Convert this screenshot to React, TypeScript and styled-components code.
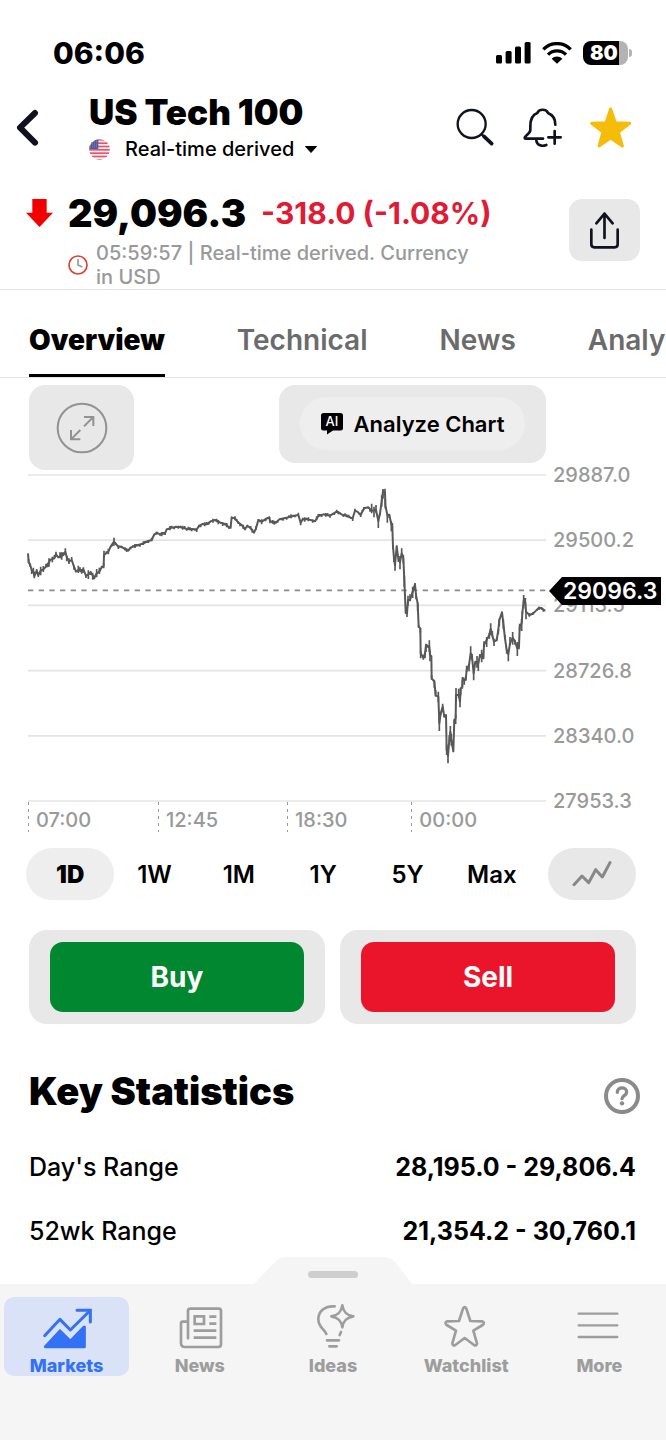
import React, { useState } from "react";
import styled, { createGlobalStyle } from "styled-components";

const GlobalStyle = createGlobalStyle`
  *, *::before, *::after { box-sizing: border-box; }
  body {
    margin: 0;
    background: #fff;
    color: #000;
    font-family: Inter, "Liberation Sans", sans-serif;
  }
  button {
    margin: 0;
    padding: 0;
    border: 0;
    background: none;
    color: inherit;
    font-family: inherit;
    cursor: pointer;
  }
  h1, h2, p { margin: 0; }
  svg { display: block; flex: none; }
`;

const Screen = styled.div`
  display: flex;
  flex-direction: column;
  min-height: 100vh;
  overflow-x: clip;
`;

const Main = styled.main`
  flex: 1;
`;

/* ---------- Status bar ---------- */

const StatusBar = styled.div`
  display: flex;
  align-items: center;
  justify-content: space-between;
  height: 86px;
  padding: 20px 38px 0 53px;
`;

const Clock = styled.span`
  font-size: 30px;
  font-weight: 800;
  line-height: 36px;
`;

const StatusIcons = styled.div`
  display: flex;
  align-items: center;
  gap: 11px;
`;

const Battery = styled.span`
  position: relative;
  width: 45px;
  height: 24px;
  padding-left: 7px;
  border-radius: 8px;
  background: linear-gradient(90deg, #000 80%, #b3b3b3 80%);
  color: #fff;
  font-size: 20px;
  font-weight: 900;
  line-height: 25px;

  &::after {
    content: "";
    position: absolute;
    top: 8px;
    right: -4px;
    width: 3px;
    height: 8px;
    border-radius: 0 3px 3px 0;
    background: #b3b3b3;
  }
`;

/* ---------- Header ---------- */

const Header = styled.header`
  display: flex;
  align-items: center;
  height: 84px;
  padding: 0 34px 0 16px;
`;

const BackButton = styled.button`
  width: 73px;
`;

const TitleBlock = styled.div`
  flex: 1;
  display: flex;
  flex-direction: column;
  align-items: flex-start;
  gap: 2px;
`;

const Title = styled.h1`
  font-size: 35px;
  font-weight: 900;
  line-height: 40px;
  white-space: nowrap;
`;

const SourceButton = styled.button`
  display: flex;
  align-items: center;
  font-size: 20px;
  font-weight: 500;
  line-height: 30px;
  white-space: nowrap;
`;

const SourceLabel = styled.span`
  margin: 0 11px 0 15px;
`;

const HeaderActions = styled.div`
  display: flex;
  align-items: center;
  gap: 27px;
`;

/* ---------- Quote ---------- */

const Quote = styled.section`
  display: flex;
  align-items: flex-start;
  padding: 20px 26px 0 26px;
  border-bottom: 1px solid #e4e4e4;
`;

const Direction = styled.span`
  width: 42px;
  padding-top: 9px;
`;

const QuoteBody = styled.div`
  flex: 1;
  min-width: 0;
`;

const PriceRow = styled.div`
  display: flex;
  align-items: center;
  gap: 15px;
  height: 46px;
  margin-bottom: 5px;
  line-height: 46px;
  white-space: nowrap;
`;

const Price = styled.span`
  font-size: 38px;
  font-weight: 900;
`;

const Change = styled.span`
  color: #df1b36;
  font-size: 30px;
  font-weight: 700;
`;

const Note = styled.div`
  display: flex;
  align-items: center;
  gap: 8px;
  max-width: 420px;
  color: #999;
  font-size: 20px;
  font-weight: 500;
  line-height: 24px;
`;

const ShareButton = styled.button`
  display: flex;
  align-items: center;
  justify-content: center;
  width: 71px;
  height: 62px;
  margin-top: 9px;
  border-radius: 13px;
  background: #e8e8e8;
`;

/* ---------- Tabs ---------- */

const Tabs = styled.nav`
  display: flex;
  gap: 72px;
  padding: 0 0 0 29px;
  border-bottom: 1px solid #e4e4e4;
  overflow: hidden;
`;

const Tab = styled.button<{ $active: boolean }>`
  flex: none;
  height: 87px;
  padding: 15px 0 0;
  border-bottom: 3px solid ${(p) => (p.$active ? "#000" : "transparent")};
  color: ${(p) => (p.$active ? "#000" : "#6b6b6b")};
  font-size: 28px;
  font-weight: ${(p) => (p.$active ? 900 : 600)};
  line-height: 36px;
`;

/* ---------- Chart ---------- */

const ChartSection = styled.section`
  display: flex;
  padding: 7px 0 0 28px;
`;

const ChartArea = styled.div`
  flex: 1;
  min-width: 0;
`;

const ChartTools = styled.div`
  display: flex;
  align-items: flex-start;
  justify-content: space-between;
  margin-bottom: 5px;
  padding-left: 1px;
`;

const ExpandButton = styled.button`
  display: flex;
  align-items: center;
  justify-content: center;
  width: 105px;
  height: 85px;
  border-radius: 16px;
  background: #e8e8e8;
`;

const AnalyzeFrame = styled.div`
  padding: 12px 21px 13px;
  border-radius: 16px;
  background: #e8e8e8;
`;

const AnalyzeButton = styled.button`
  display: flex;
  align-items: center;
  justify-content: center;
  gap: 11px;
  width: 225px;
  height: 53px;
  border-radius: 27px;
  background: #eee;
  font-size: 22px;
  font-weight: 600;
  white-space: nowrap;
`;

const Plot = styled.svg`
  width: 100%;
  height: 326px;
  overflow: visible;
`;

const TimeAxis = styled.div`
  display: flex;
  margin-top: 1px;
`;

const TimeMark = styled.span<{ $span: number }>`
  flex: ${(p) => p.$span} 1 0;
  padding: 6px 0 0 8px;
  background: repeating-linear-gradient(#999 0 3px, transparent 3px 7px) left / 1px 100% no-repeat;
  color: #999;
  font-size: 20px;
  font-weight: 500;
  line-height: 24px;
`;

const PriceAxis = styled.div`
  position: relative;
  flex: 0 0 120px;
  display: flex;
  flex-direction: column;
  justify-content: space-between;
  height: 428px;
  padding: 78px 0 0 7px;
  color: #999;
  font-size: 20px;
  font-weight: 500;
  line-height: 24px;
`;

const PriceTag = styled.span`
  position: absolute;
  top: 192px;
  left: 3px;
  height: 28px;
  padding: 0 4px 0 14px;
  background: #000;
  clip-path: polygon(0 50%, 13px 0, 100% 0, 100% 100%, 13px 100%);
  color: #fff;
  font-size: 23px;
  font-weight: 600;
  line-height: 28px;
`;

/* ---------- Ranges ---------- */

const RangeRow = styled.div`
  display: flex;
  gap: 14px;
  padding: 16px 30px 0 28px;
`;

const Ranges = styled.div`
  flex: 1;
  display: grid;
  grid-template-columns: repeat(6, 1fr);
`;

const RangeButton = styled.button<{ $active: boolean }>`
  height: 52px;
  margin: 0 -2px;
  border-radius: 26px;
  background: ${(p) => (p.$active ? "#eee" : "transparent")};
  font-size: 24px;
  font-weight: ${(p) => (p.$active ? 900 : 600)};
`;

const ChartTypeButton = styled.button`
  display: flex;
  align-items: center;
  justify-content: center;
  width: 88px;
  height: 52px;
  border-radius: 26px;
  background: #e8e8e8;
`;

/* ---------- Trade ---------- */

const TradeRow = styled.div`
  display: grid;
  grid-template-columns: 1fr 1fr;
  gap: 15px;
  padding: 30px 30px 0 29px;
`;

const TradeFrame = styled.div`
  padding: 12px 21px;
  border-radius: 18px;
  background: #e8e8e8;
`;

const TradeButton = styled.button<{ $color: string }>`
  width: 100%;
  height: 70px;
  border-radius: 13px;
  background: ${(p) => p.$color};
  color: #fff;
  font-size: 28px;
  font-weight: 700;
`;

/* ---------- Key statistics ---------- */

const Stats = styled.section`
  padding: 44px 30px 0 29px;
`;

const StatsHead = styled.div`
  display: flex;
  align-items: flex-end;
  justify-content: space-between;
  margin: 0 -4px 21px 0;
`;

const StatsTitle = styled.h2`
  font-size: 38px;
  font-weight: 900;
  line-height: 46px;
`;

const StatsTable = styled.table`
  width: 100%;
  border-collapse: collapse;
  font-size: 25px;

  tr { height: 64px; }
  th, td { padding: 0; }
  th { font-weight: 500; text-align: left; }
  td { font-weight: 700; text-align: right; }
`;

/* ---------- Bottom navigation ---------- */

const BottomNav = styled.nav`
  position: sticky;
  bottom: 0;
  display: grid;
  grid-template-columns: repeat(5, 1fr);
  height: 156px;
  padding: 13px 0 64px;
  background: #f5f5f5;
`;

const DrawerHandle = styled.span`
  position: absolute;
  left: 50%;
  bottom: 100%;
  width: 158px;
  height: 27px;
  transform: translateX(-50%);
`;

const NavItem = styled.button<{ $active: boolean }>`
  display: flex;
  flex-direction: column;
  align-items: center;
  justify-content: flex-end;
  gap: 4px;
  margin: 0 4px;
  border-radius: 10px;
  background: ${(p) => (p.$active ? "#d9e2f6" : "transparent")};
  color: ${(p) => (p.$active ? "#3371f5" : "#9d9d9d")};
  font-size: 18px;
  font-weight: 800;
  line-height: 20px;
`;

/* ---------- Icons ---------- */

const Signal = () => (
  <svg width="35" height="22" viewBox="0 0 35 22" aria-hidden="true">
    <rect x="0" y="13" width="6" height="8.500" rx="1.500" />
    <rect x="9.600" y="9" width="6" height="12.500" rx="1.500" />
    <rect x="19" y="4.500" width="6" height="17" rx="1.500" />
    <rect x="28.600" y="0" width="6" height="21.500" rx="1.500" />
  </svg>
);

const Wifi = () => (
  <svg width="30" height="22" viewBox="0 0 90 66" aria-hidden="true">
    <path d="M4 22 C27 -1 63 -1 86 22" fill="none" stroke="#000" strokeWidth="10" />
    <path d="M18 38 C33 23 57 23 72 38" fill="none" stroke="#000" strokeWidth="10" />
    <path d="M45 65 L29 50 C38 41 52 41 61 50 Z" />
  </svg>
);

const BackIcon = () => (
  <svg width="24" height="40" viewBox="0 0 72 120" fill="none" stroke="#10131f" strokeWidth="18" strokeLinecap="round" strokeLinejoin="round">
    <path d="M57 15 L12 59 L57 104" />
  </svg>
);

const FlagIcon = () => (
  <svg width="21" height="21" viewBox="0 0 63 63" aria-hidden="true">
    <defs>
      <clipPath id="flag">
        <circle cx="31.500" cy="31.500" r="31" />
      </clipPath>
    </defs>
    <g clipPath="url(#flag)">
      <rect width="63" height="63" fill="#f8f3f5" />
      {[0, 10, 20, 30, 40, 50, 60].map((y) => (
        <rect key={y} y={y} width="63" height="5" fill="#e8546a" />
      ))}
      <rect width="28" height="30" fill="#4c5a9c" />
      {[6, 12, 18, 24].map((y) => (
        <path key={y} d={`M4 ${y} H28`} stroke="#c3c9e3" strokeWidth="2" strokeDasharray="2 4" />
      ))}
    </g>
  </svg>
);

const CaretIcon = () => (
  <svg width="12" height="7" viewBox="0 0 12 7" aria-hidden="true">
    <path d="M0.500 0.500 H11.500 L6 6.500 Z" stroke="#000" strokeLinejoin="round" />
  </svg>
);

const SearchIcon = () => (
  <svg width="40" height="40" viewBox="0 0 120 120" fill="none" stroke="#10131f">
    <circle cx="47" cy="48" r="42" strokeWidth="7" />
    <path d="M77 79 L88 90" strokeWidth="7" />
    <path d="M84 85 L107 107" strokeWidth="11" strokeLinecap="round" />
  </svg>
);

const BellPlusIcon = () => (
  <svg width="40" height="40" viewBox="0 0 120 120" fill="none" stroke="#10131f" strokeWidth="8" strokeLinecap="round" strokeLinejoin="round">
    <path d="M97 50 C97 31 90 21 75 15 C70 2 48 2 43 15 C27 21 22 36 22 54 V66 C22 77 5 84 5 89 Q5 92 8 92 H60" />
    <path d="M76 88 H113 M95 69 V107" />
    <path d="M40 98 C43 113 57 116 70 111" />
  </svg>
);

const StarIcon = () => (
  <svg width="42" height="42" viewBox="0 0 126 126" fill="#f5bc0a" stroke="#f5bc0a" strokeWidth="9" strokeLinejoin="round">
    <path d="M62 6 L76 47 L119 49 L85 75 L97 117 L62 93 L27 117 L39 75 L5 49 L48 47 Z" />
  </svg>
);

const DownArrow = () => (
  <svg width="27" height="28" viewBox="0 0 81 84" aria-label="Down">
    <path d="M19 0 H62 V41 H81 L40.500 84 L0 41 H19 Z" fill="#f20000" />
  </svg>
);

const ClockIcon = () => (
  <svg width="20" height="20" viewBox="0 0 60 60" fill="none" aria-hidden="true">
    <circle cx="30" cy="30" r="27" stroke="#e0402f" strokeWidth="5" />
    <path d="M30 12 V30 L43 36" stroke="#999" strokeWidth="5" />
  </svg>
);

const ShareIcon = () => (
  <svg width="33" height="40" viewBox="0 0 99 120" fill="none" stroke="#10131f" strokeWidth="8" strokeLinecap="round" strokeLinejoin="round">
    <path d="M10 59 V103 Q10 112 19 112 H80 Q89 112 89 103 V59" />
    <path d="M49.500 11 V84 M25 40 L49.500 11 L74 40" />
  </svg>
);

const ExpandIcon = () => (
  <svg width="52" height="52" viewBox="0 0 156 156" fill="none" stroke="#929292" strokeWidth="6">
    <circle cx="78" cy="78" r="73" />
    <path d="M84 73 L112 45 M84 45 H112 V72 M73 84 L45 112 M45 84 V112 H73" />
  </svg>
);

const AiIcon = () => (
  <svg width="22" height="22" viewBox="0 0 22 22" aria-hidden="true">
    <path d="M2.500 0 H19.500 Q22 0 22 2.500 V15 Q22 17.500 19.500 17.500 H12 L6 21.500 V17.500 H2.500 Q0 17.500 0 15 V2.500 Q0 0 2.500 0 Z" />
    <text x="11" y="13" fill="#fff" fontFamily="Inter, sans-serif" fontSize="13" fontWeight="500" textAnchor="middle">
      AI
    </text>
  </svg>
);

const TrendIcon = () => (
  <svg width="40" height="28" viewBox="0 0 120 84" fill="none" stroke="#888" strokeWidth="9" strokeLinecap="round" strokeLinejoin="round">
    <path d="M6 74 L30 48 L50 68 L71 29 L91 51 L114 8" />
  </svg>
);

const HelpIcon = () => (
  <svg width="36" height="36" viewBox="0 0 108 108" fill="none" stroke="#8a8a8a">
    <circle cx="54" cy="54" r="48" strokeWidth="12" />
    <path d="M40 43 C40 25 68 26 68 42 C68 53 54 52 54 62" strokeWidth="10" strokeLinecap="round" />
    <circle cx="54" cy="76" r="6.500" fill="#8a8a8a" stroke="none" />
  </svg>
);

const NavIcon = ({ children }: { children: React.ReactNode }) => (
  <svg width="50" height="50" viewBox="0 0 150 150" fill="none" stroke="currentColor" strokeWidth="8" strokeLinecap="round" strokeLinejoin="round">
    {children}
  </svg>
);

const NAV_ITEMS = [
  {
    label: "Markets",
    icon: (
      <>
        <path d="M8 101 L54 52 L85 84 L143 27" strokeWidth="9" />
        <path d="M105 25 H145 V60" strokeWidth="9" strokeLinejoin="miter" />
        <path d="M8 134 L54 84 L85 115 L125 74 L129 74 V136 H9 Z" fill="currentColor" strokeWidth="5" />
      </>
    ),
  },
  {
    label: "News",
    icon: (
      <>
        <path d="M39 109 V27 Q39 20 46 20 H131 Q138 20 138 27 V127 Q138 135 130 135 H30 Q18 135 18 123 V64 Q18 59 23 59 H38" />
        <path d="M59 43 H87 V66 H59 Z M103 44 H124 M103 65 H124 M56 86 H124 M56 107 H124" strokeLinecap="butt" strokeLinejoin="miter" />
      </>
    ),
  },
  {
    label: "Ideas",
    icon: (
      <>
        <path d="M55 96 C50 82 31 76 31 52 C31 28 50 13 74 13 H80" />
        <path d="M99 90 L95 99" />
        <path d="M103 10 C106 30 115 39 136 43 C115 47 106 56 103 76 C100 56 91 47 70 43 C91 39 100 30 103 10 Z" />
        <path d="M57 115 H93 M64 133 H86" />
      </>
    ),
  },
  {
    label: "Watchlist",
    icon: (
      <path d="M66 20 Q71 11 76 20 L88 57 L123 58 Q133 61 125 69 L97 86 L108 124 Q107 133 99 129 L71 108 L43 129 Q35 133 34 124 L45 86 L17 69 Q9 61 19 58 L54 57 Z" />
    ),
  },
  {
    label: "More",
    icon: <path d="M14 35 H130 M14 70 H130 M14 105 H130" strokeWidth="7" />,
  },
];

/* ---------- Price series ---------- */

type Point = [number, number];

const PLOT_WIDTH = 1554;
const PLOT_HEIGHT = 978;

const DAY_SESSION: Point[] = [
  [0, 235], [2, 262], [6, 268], [11, 285], [16, 290], [19, 303], [26, 288], [31, 300], [38, 287],
  [46, 283], [54, 275], [63, 263], [66, 255], [79, 250], [84, 238], [91, 247], [106, 240],
  [112, 230], [116, 245], [123, 260], [131, 255], [138, 275], [144, 290], [151, 285], [161, 290],
  [166, 282], [174, 303], [181, 298], [188, 293], [199, 308], [206, 295], [214, 290], [221, 277],
  [227, 273], [228, 240], [241, 230], [248, 215], [258, 200], [264, 207], [271, 215], [281, 215],
  [291, 223], [301, 227], [308, 217], [321, 213], [331, 210], [346, 205], [361, 198], [371, 195],
  [378, 180], [386, 173], [396, 178], [411, 175], [416, 163], [431, 158], [451, 155], [464, 158],
  [476, 162], [491, 163], [506, 163], [513, 153], [523, 147], [536, 148], [548, 139], [561, 135],
  [571, 140], [584, 145], [596, 150], [603, 158], [608, 155], [611, 127], [621, 130], [631, 143],
  [641, 150], [651, 163], [658, 152], [668, 160], [678, 173], [684, 160], [691, 135], [701, 140],
  [713, 132], [724, 127],
];

const EVENING_SESSION: Point[] = [
  [726, 138], [734, 142], [744, 143], [754, 133], [776, 128], [796, 123], [811, 120], [818, 143],
  [824, 133], [841, 133], [861, 139], [871, 123], [886, 118], [906, 122], [926, 110], [941, 118],
  [956, 123], [974, 130], [981, 107], [988, 110], [998, 120], [1008, 100], [1021, 97],
  [1031, 107], [1044, 105], [1051, 138], [1056, 115], [1061, 80], [1065, 48], [1071, 52],
  [1072, 90], [1078, 120], [1084, 120], [1090, 148], [1093, 155], [1095, 215], [1098, 250],
  [1101, 270], [1106, 215], [1111, 250], [1116, 262], [1121, 235], [1126, 250], [1129, 315],
  [1133, 412], [1137, 415],
];

const NIGHT_SESSION: Point[] = [
  [1140, 375], [1146, 375], [1154, 350], [1161, 328], [1164, 360], [1169, 385], [1172, 455],
  [1177, 460], [1178, 535], [1186, 548], [1191, 535], [1194, 510], [1204, 515], [1206, 540],
  [1210, 543], [1211, 610], [1219, 620], [1223, 662], [1231, 665], [1234, 745], [1238, 715],
  [1244, 695], [1249, 725], [1254, 720], [1256, 825], [1260, 842], [1264, 795], [1267, 770],
  [1270, 795], [1276, 828], [1279, 735], [1283, 730], [1284, 660], [1292, 660], [1296, 680],
  [1298, 640], [1303, 635], [1304, 610], [1313, 615], [1316, 585], [1323, 570], [1328, 535],
  [1332, 545], [1337, 595], [1342, 560], [1351, 565], [1356, 540], [1366, 550], [1368, 510],
  [1376, 495], [1384, 480], [1388, 462], [1398, 500], [1406, 495], [1411, 465], [1414, 435],
  [1422, 412], [1426, 445], [1431, 490], [1436, 525], [1441, 538], [1446, 505], [1454, 488],
  [1461, 500], [1468, 520], [1473, 515], [1475, 455], [1481, 445], [1483, 415], [1487, 377],
  [1492, 382], [1494, 410], [1504, 420], [1511, 418], [1521, 410], [1533, 398], [1541, 400],
  [1551, 407],
];

const SERIES: Point[] = [...DAY_SESSION, ...EVENING_SESSION, ...NIGHT_SESSION];

const volatility = (x: number) => {
  if (x < 260) return 18;
  if (x < 1030) return 10;
  if (x < 1495) return 30;
  return 9;
};

const linePath = SERIES.map(([x, y], i) => `${i ? "L" : "M"}${x} ${y}`).join(" ");

/* High–low wicks, one every few minutes along the series. */
const wickPath = SERIES.slice(1)
  .flatMap(([x, y], i) => {
    const [px, py] = SERIES[i];
    const count = Math.max(1, Math.round((x - px) / 6));
    return Array.from({ length: count }, (_, k) => {
      const t = (k + 1) / count;
      const wx = Math.round(px + (x - px) * t);
      const wy = py + (y - py) * t;
      const up = (volatility(wx) * ((wx * 37) % 11)) / 14;
      const down = (volatility(wx) * ((wx * 53) % 13)) / 16;
      return `M${wx} ${Math.round(wy - up)} V${Math.round(wy + down)}`;
    });
  })
  .join(" ");

const PRICE_LEVELS = ["29887.0", "29500.2", "29113.5", "28726.8", "28340.0", "27953.3"];

const TIME_MARKS = [
  { label: "07:00", span: 130 },
  { label: "12:45", span: 129 },
  { label: "18:30", span: 124 },
  { label: "00:00", span: 135 },
];

const TABS = ["Overview", "Technical", "News", "Analysis"];
const RANGES = ["1D", "1W", "1M", "1Y", "5Y", "Max"];

const STATS = [
  { label: "Day's Range", value: "28,195.0 - 29,806.4" },
  { label: "52wk Range", value: "21,354.2 - 30,760.1" },
];

const PriceChart = () => (
  <Plot viewBox={`0 0 ${PLOT_WIDTH} ${PLOT_HEIGHT}`} preserveAspectRatio="none" role="img" aria-label="US Tech 100 intraday price">
    {PRICE_LEVELS.map((level, i) => {
      const y = (PLOT_HEIGHT / (PRICE_LEVELS.length - 1)) * i;
      return <line key={level} x1="0" x2={PLOT_WIDTH} y1={y} y2={y} stroke="#e4e4e4" strokeWidth="5" />;
    })}
    <line x1="0" x2={PLOT_WIDTH} y1="346" y2="346" stroke="#8c8c8c" strokeWidth="5" strokeDasharray="16 16" />
    <g fill="none" stroke="#585858" strokeLinejoin="round">
      <path d={linePath} strokeWidth="6" />
      <path d={wickPath} strokeWidth="5" />
    </g>
  </Plot>
);

export default function App() {
  const [tab, setTab] = useState("Overview");
  const [range, setRange] = useState("1D");
  const [section, setSection] = useState("Markets");

  return (
    <Screen>
      <GlobalStyle />
      <StatusBar>
        <Clock>06:06</Clock>
        <StatusIcons>
          <Signal />
          <Wifi />
          <Battery>80</Battery>
        </StatusIcons>
      </StatusBar>

      <Header>
        <BackButton aria-label="Back">
          <BackIcon />
        </BackButton>
        <TitleBlock>
          <Title>US Tech 100</Title>
          <SourceButton>
            <FlagIcon />
            <SourceLabel>Real-time derived</SourceLabel>
            <CaretIcon />
          </SourceButton>
        </TitleBlock>
        <HeaderActions>
          <button aria-label="Search">
            <SearchIcon />
          </button>
          <button aria-label="Add alert">
            <BellPlusIcon />
          </button>
          <button aria-label="Remove from watchlist">
            <StarIcon />
          </button>
        </HeaderActions>
      </Header>

      <Main>
        <Quote>
          <Direction>
            <DownArrow />
          </Direction>
          <QuoteBody>
            <PriceRow>
              <Price>29,096.3</Price>
              <Change>-318.0 (-1.08%)</Change>
            </PriceRow>
            <Note>
              <ClockIcon />
              <p>05:59:57 | Real-time derived. Currency in USD</p>
            </Note>
          </QuoteBody>
          <ShareButton aria-label="Share">
            <ShareIcon />
          </ShareButton>
        </Quote>

        <Tabs aria-label="Instrument sections">
          {TABS.map((name) => (
            <Tab key={name} $active={name === tab} onClick={() => setTab(name)}>
              {name}
            </Tab>
          ))}
        </Tabs>

        <ChartSection>
          <ChartArea>
            <ChartTools>
              <ExpandButton aria-label="Full screen chart">
                <ExpandIcon />
              </ExpandButton>
              <AnalyzeFrame>
                <AnalyzeButton>
                  <AiIcon />
                  Analyze Chart
                </AnalyzeButton>
              </AnalyzeFrame>
            </ChartTools>
            <PriceChart />
            <TimeAxis>
              {TIME_MARKS.map((mark) => (
                <TimeMark key={mark.label} $span={mark.span}>
                  {mark.label}
                </TimeMark>
              ))}
            </TimeAxis>
          </ChartArea>
          <PriceAxis>
            {PRICE_LEVELS.map((level) => (
              <span key={level}>{level}</span>
            ))}
            <PriceTag>29096.3</PriceTag>
          </PriceAxis>
        </ChartSection>

        <RangeRow>
          <Ranges>
            {RANGES.map((name) => (
              <RangeButton key={name} $active={name === range} onClick={() => setRange(name)}>
                {name}
              </RangeButton>
            ))}
          </Ranges>
          <ChartTypeButton aria-label="Chart type">
            <TrendIcon />
          </ChartTypeButton>
        </RangeRow>

        <TradeRow>
          <TradeFrame>
            <TradeButton $color="#018730">Buy</TradeButton>
          </TradeFrame>
          <TradeFrame>
            <TradeButton $color="#ea152b">Sell</TradeButton>
          </TradeFrame>
        </TradeRow>

        <Stats>
          <StatsHead>
            <StatsTitle>Key Statistics</StatsTitle>
            <button aria-label="About key statistics">
              <HelpIcon />
            </button>
          </StatsHead>
          <StatsTable>
            <tbody>
              {STATS.map((stat) => (
                <tr key={stat.label}>
                  <th scope="row">{stat.label}</th>
                  <td>{stat.value}</td>
                </tr>
              ))}
            </tbody>
          </StatsTable>
        </Stats>
      </Main>

      <BottomNav aria-label="Main">
        <DrawerHandle>
          <svg width="158" height="27" viewBox="0 0 158 27" aria-hidden="true">
            <path d="M0 27 L22 4 Q26 0 32 0 H130 Q137 0 142 6 L158 27 Z" fill="#f5f5f5" />
            <rect x="54" y="14" width="50" height="7" rx="3.500" fill="#cecece" />
          </svg>
        </DrawerHandle>
        {NAV_ITEMS.map((item) => (
          <NavItem key={item.label} $active={item.label === section} onClick={() => setSection(item.label)}>
            <NavIcon>{item.icon}</NavIcon>
            {item.label}
          </NavItem>
        ))}
      </BottomNav>
    </Screen>
  );
}
